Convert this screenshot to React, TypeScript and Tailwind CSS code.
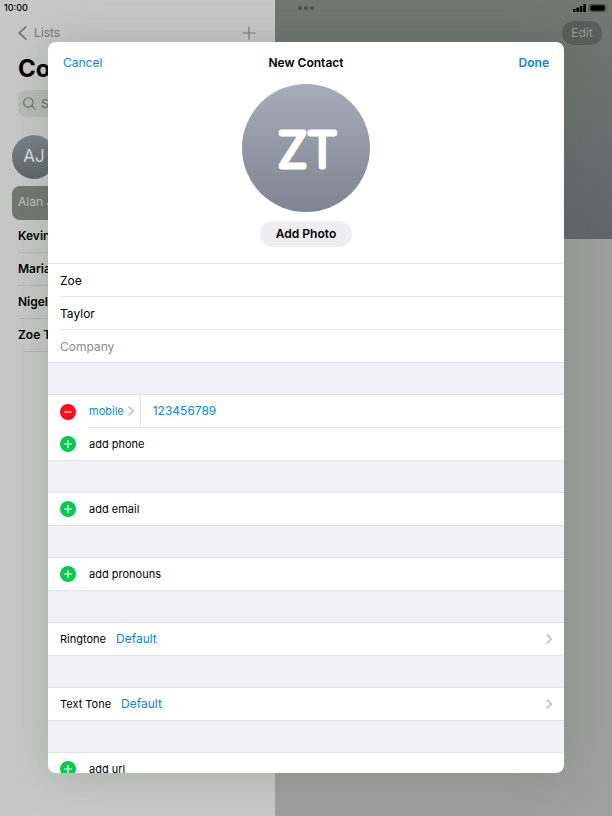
import { useState } from "react"
import type { ReactNode } from "react"

type Contact = {
  id: number
  name: string
}

const contacts: Contact[] = [
  { id: 1, name: "Kevin" },
  { id: 2, name: "Maria" },
  { id: 3, name: "Nigel" },
  { id: 4, name: "Zoe T" }
]

const Chevron = () => (
  <svg width="7" height="10" viewBox="0 0 7 10" fill="none" stroke="#bdbdc0" strokeWidth="1.6" strokeLinecap="round" strokeLinejoin="round">
    <path d="M1.2 1.2 5.4 5 1.2 8.8" />
  </svg>
)

const RoundIcon = ({ minus = false }: { minus?: boolean }) => (
  <svg className="shrink-0" width="16" height="16" viewBox="0 0 16 16" stroke="#fff" strokeWidth="1.2" strokeLinecap="round">
    <circle cx="8" cy="8" r="8" fill={minus ? "#fb0f1c" : "#05ca4f"} stroke="none" />
    <path d="M4.6 8h6.8" />
    {!minus && <path d="M8 4.6v6.8" />}
  </svg>
)

const Gap = () => <div className="h-8 shrink-0 border-t border-[#e2e2e5] bg-[#f1f0f6]" />

const AddRow = ({ label }: { label: string }) => (
  <button className="flex h-8 w-full items-center gap-[13px] pl-3 text-left text-[11px]">
    <RoundIcon />
    {label}
  </button>
)

const Section = ({ children }: { children: ReactNode }) => (
  <section className="shrink-0 border-t border-[#e2e2e5]">{children}</section>
)

const ToneRow = ({ label }: { label: string }) => (
  <button className="flex h-8 w-full items-center gap-[10px] pr-[11px] pl-3 text-left text-[11px]">
    {label}
    <span className="flex-1 text-xs text-[#0a84e8]">Default</span>
    <Chevron />
  </button>
)

const Sidebar = () => (
  <aside className="flex w-[275px] shrink-0 flex-col bg-[#c8c8c8]">
    <div className="h-[15px] pl-1 text-[9px] leading-[15px] font-medium">10:00</div>
    <div className="flex h-9 items-center justify-between pr-[19px] pl-[18px] text-[#787b78]">
      <button className="flex items-center gap-[7px] text-xs">
        <svg width="9" height="14" viewBox="0 0 9 14" fill="none" stroke="currentColor" strokeWidth="1.7" strokeLinecap="round" strokeLinejoin="round">
          <path d="M7.8 1 1.2 7l6.6 6" />
        </svg>
        Lists
      </button>
      <button aria-label="Add contact">
        <svg width="14" height="14" viewBox="0 0 14 14" stroke="currentColor" strokeWidth="1.2" strokeLinecap="round">
          <path d="M7 1v12M1 7h12" />
        </svg>
      </button>
    </div>
    <h1 className="h-[39px] pl-[18px] text-2xl leading-9 font-bold">Contacts</h1>
    <label className="mr-3 ml-[18px] flex h-[27px] items-center gap-[5px] rounded-lg bg-[#b9bab9] pl-[5px] text-[#6f716f]">
      <svg className="shrink-0" width="13" height="13" viewBox="0 0 13 13" fill="none" stroke="currentColor" strokeWidth="1.1" strokeLinecap="round">
        <circle cx="5.4" cy="5.4" r="4.7" />
        <path d="m8.9 8.9 3.4 3.4" />
      </svg>
      <input className="w-full min-w-0 bg-transparent text-xs outline-none placeholder:text-[#666966]" placeholder="Search" aria-label="Search" />
    </label>
    <div className="mt-[18px] ml-3 flex size-11 items-center justify-center rounded-full bg-linear-to-b from-[#7d848c] to-[#5d656b] text-[17px] text-[#dcdedf]">
      AJ
    </div>
    <ul className="mt-[7px] text-xs font-semibold">
      <li className="mr-3 ml-3 h-[34px] rounded-lg bg-[#747773] pl-1.5 leading-8 font-normal text-[#c2c4c1]">Alan J</li>
      {contacts.map(contact => (
        <li key={contact.id} className="ml-[18px] h-[33px] border-b border-[#b3b5b2] leading-8 last:ml-6 last:-indent-1.5">
          {contact.name}
        </li>
      ))}
    </ul>
  </aside>
)

const Detail = () => (
  <main className="flex min-w-0 flex-1 flex-col bg-[#9f9f9f]">
    <div className="h-[239px] shrink-0 bg-linear-to-b from-[#747674] via-[#6c706f] to-[#62656d]">
      <div className="flex h-[15px] items-center pr-1 pl-[23px]">
        <div className="flex gap-[2px]">
          <span className="size-1 rounded-full bg-[#505250]" />
          <span className="size-1 rounded-full bg-[#505250]" />
          <span className="size-1 rounded-full bg-[#505250]" />
        </div>
        <svg className="ml-auto" width="35" height="8" viewBox="0 0 35 8">
          <rect x="0" y="5" width="2.6" height="3" rx=".7" />
          <rect x="3.4" y="3.6" width="2.6" height="4.4" rx=".7" />
          <rect x="6.8" y="2" width="2.6" height="6" rx=".7" />
          <rect x="10.2" y="0" width="2.6" height="8" rx=".7" />
          <rect x="16.4" y=".4" width="16.2" height="7.2" rx="2.2" fill="none" stroke="#3a3b3a" strokeWidth=".8" />
          <rect x="17.4" y="1.3" width="14.2" height="5.4" rx="1.4" />
          <path d="M33.6 2.8q1.1 1.2 0 2.4z" fill="#3a3b3a" />
        </svg>
      </div>
      <div className="flex justify-end pt-[6px] pr-[10px]">
        <button className="h-6 w-10 rounded-full bg-[#5b5e5c] text-xs text-[#979a98]">Edit</button>
      </div>
    </div>
  </main>
)

const NewContact = () => {
  const [first, setFirst] = useState("Zoe")
  const [last, setLast] = useState("Taylor")
  const [company, setCompany] = useState("")
  const [phone, setPhone] = useState("123456789")

  return (
    <div role="dialog" aria-label="New Contact" className="absolute inset-x-12 top-[42px] bottom-[43px] flex flex-col overflow-hidden rounded-lg bg-white shadow-[0_0_48px_rgba(50,80,50,0.22)]">
      <header className="grid h-[42px] shrink-0 grid-cols-3 items-center px-[15px] text-xs">
        <button className="justify-self-start text-[#0a84e8]">Cancel</button>
        <h2 className="text-center font-semibold">New Contact</h2>
        <button className="justify-self-end font-semibold text-[#0a84e8]">Done</button>
      </header>

      <div className="flex h-[179px] shrink-0 flex-col items-center gap-[9px]">
        <svg width="128" height="128" viewBox="0 0 128 128">
          <defs>
            <linearGradient id="avatar" x1="0" y1="0" x2="0" y2="1">
              <stop offset="0" stopColor="#a5acba" />
              <stop offset=".5" stopColor="#9298a6" />
              <stop offset=".8" stopColor="#888b97" />
              <stop offset="1" stopColor="#7d8691" />
            </linearGradient>
          </defs>
          <circle cx="64" cy="64" r="64" fill="url(#avatar)" />
          <text x="65.5" y="83" textAnchor="middle" fontSize="48" fontWeight="200" fill="#fff" stroke="#fff" strokeWidth="5" strokeLinecap="round" strokeLinejoin="round">
            ZT
          </text>
        </svg>
        <button className="h-[26px] rounded-full bg-[#eeeef0] px-4 text-xs font-semibold">Add Photo</button>
      </div>

      <Section>
        <input className="block h-8 w-full px-3 text-xs outline-none" value={first} onChange={e => setFirst(e.target.value)} aria-label="First name" />
        <div className="ml-3 border-y border-[#e6e6e8]">
          <input className="block h-8 w-full text-xs outline-none" value={last} onChange={e => setLast(e.target.value)} aria-label="Last name" />
        </div>
        <input className="block h-8 w-full px-3 text-xs outline-none placeholder:text-[#8b8b8f]" placeholder="Company" value={company} onChange={e => setCompany(e.target.value)} aria-label="Company" />
      </Section>
      <Gap />

      <Section>
        <div className="flex h-[33px] items-center gap-[13px] pl-3">
          <button aria-label="Remove phone">
            <RoundIcon minus />
          </button>
          <div className="flex h-full flex-1 items-center border-b border-[#e6e6e8]">
            <button className="flex h-full items-center gap-1 border-r border-[#e6e6e8] pr-[5px] text-[11px] text-[#0a84e8]">
              mobile
              <Chevron />
            </button>
            <input className="min-w-0 flex-1 pl-3 text-xs text-[#0a84e8] outline-none" value={phone} onChange={e => setPhone(e.target.value)} aria-label="Mobile number" />
          </div>
        </div>
        <AddRow label="add phone" />
      </Section>
      <Gap />

      <Section>
        <AddRow label="add email" />
      </Section>
      <Gap />
      <Section>
        <AddRow label="add pronouns" />
      </Section>
      <Gap />
      <Section>
        <ToneRow label="Ringtone" />
      </Section>
      <Gap />
      <Section>
        <ToneRow label="Text Tone" />
      </Section>
      <Gap />
      <Section>
        <AddRow label="add url" />
      </Section>
    </div>
  )
}

const App = () => (
  <div className="relative flex h-screen overflow-hidden font-['Inter',sans-serif] text-black">
    <Sidebar />
    <Detail />
    <NewContact />
  </div>
)

export default App
